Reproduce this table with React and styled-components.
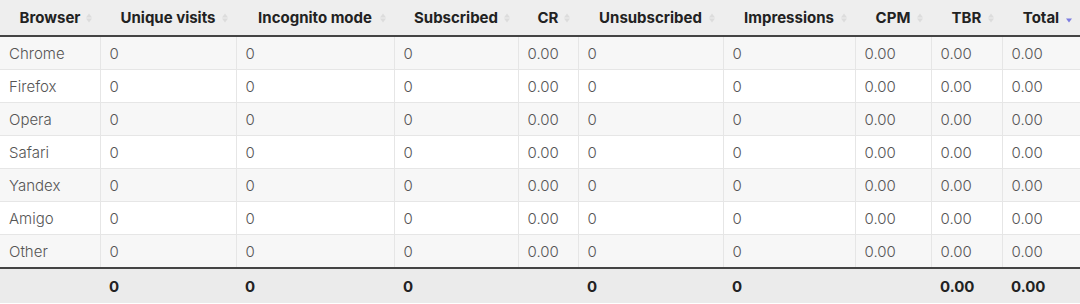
import styled, { createGlobalStyle } from "styled-components"

const columns = [
  { key: "browser", title: "Browser", width: 100 },
  { key: "visits", title: "Unique visits", width: 136 },
  { key: "incognito", title: "Incognito mode", width: 158 },
  { key: "subscribed", title: "Subscribed", width: 124 },
  { key: "cr", title: "CR", width: 60 },
  { key: "unsubscribed", title: "Unsubscribed", width: 145 },
  { key: "impressions", title: "Impressions", width: 132 },
  { key: "cpm", title: "CPM", width: 76 },
  { key: "tbr", title: "TBR", width: 71 },
  { key: "total", title: "Total", width: 78, sorted: true },
]

const browsers = ["Chrome", "Firefox", "Opera", "Safari", "Yandex", "Amigo", "Other"]

const rows = browsers.map((name) => ({
  browser: name,
  visits: "0",
  incognito: "0",
  subscribed: "0",
  cr: "0.00",
  unsubscribed: "0",
  impressions: "0",
  cpm: "0.00",
  tbr: "0.00",
  total: "0.00",
}))

const totals = {
  browser: "",
  visits: "0",
  incognito: "0",
  subscribed: "0",
  cr: "",
  unsubscribed: "0",
  impressions: "0",
  cpm: "",
  tbr: "0.00",
  total: "0.00",
}

const GlobalStyle = createGlobalStyle`
  body {
    margin: 0;
    background: #fff;
    font-family: "Inter", "Liberation Sans", sans-serif;
  }
`

const Table = styled.table`
  width: 1080px;
  border-collapse: collapse;
  table-layout: fixed;
  font-size: 15px;
`

const HeadCell = styled.th`
  position: relative;
  height: 35px;
  padding: 0 4px;
  background: #eeeeee;
  border-bottom: 2px solid #444;
  color: #222;
  font-weight: 700;
  text-align: center;
  white-space: nowrap;
`

const SortIcon = styled.span`
  position: absolute;
  right: 8px;
  top: 50%;
  transform: translateY(-50%);
  display: flex;
  flex-direction: column;
  gap: 1px;

  &::before,
  &::after {
    content: "";
    border-left: 3px solid transparent;
    border-right: 3px solid transparent;
  }
  &::before {
    border-bottom: 4px solid ${(p) => (p.$active ? "transparent" : "#dcdcdc")};
  }
  &::after {
    border-top: 4px solid ${(p) => (p.$active ? "#7b7be0" : "#dcdcdc")};
  }
`

const Row = styled.tr`
  background: ${(p) => (p.$odd ? "#f7f7f7" : "#ffffff")};
`

const Cell = styled.td`
  height: 32px;
  padding: 0 9px;
  color: #555;
  font-weight: 300;
  border-bottom: 1px solid #e6e6e6;
  border-left: 1px solid #e6e6e6;
  white-space: nowrap;

  &:first-child {
    border-left: none;
  }
`

const FootCell = styled.td`
  height: 34px;
  padding: 0 9px;
  background: #ebebeb;
  border-top: 2px solid #444;
  color: #222;
  font-weight: 700;
`

export default function App() {
  return (
    <>
      <GlobalStyle />
      <Table>
        <colgroup>
          {columns.map((c) => (
            <col key={c.key} style={{ width: c.width }} />
          ))}
        </colgroup>
        <thead>
          <tr>
            {columns.map((c) => (
              <HeadCell key={c.key}>
                {c.title}
                <SortIcon $active={c.sorted} />
              </HeadCell>
            ))}
          </tr>
        </thead>
        <tbody>
          {rows.map((row, i) => (
            <Row key={row.browser} $odd={i % 2 === 0}>
              {columns.map((c) => (
                <Cell key={c.key}>{row[c.key]}</Cell>
              ))}
            </Row>
          ))}
        </tbody>
        <tfoot>
          <tr>
            {columns.map((c) => (
              <FootCell key={c.key}>{totals[c.key]}</FootCell>
            ))}
          </tr>
        </tfoot>
      </Table>
    </>
  )
}
